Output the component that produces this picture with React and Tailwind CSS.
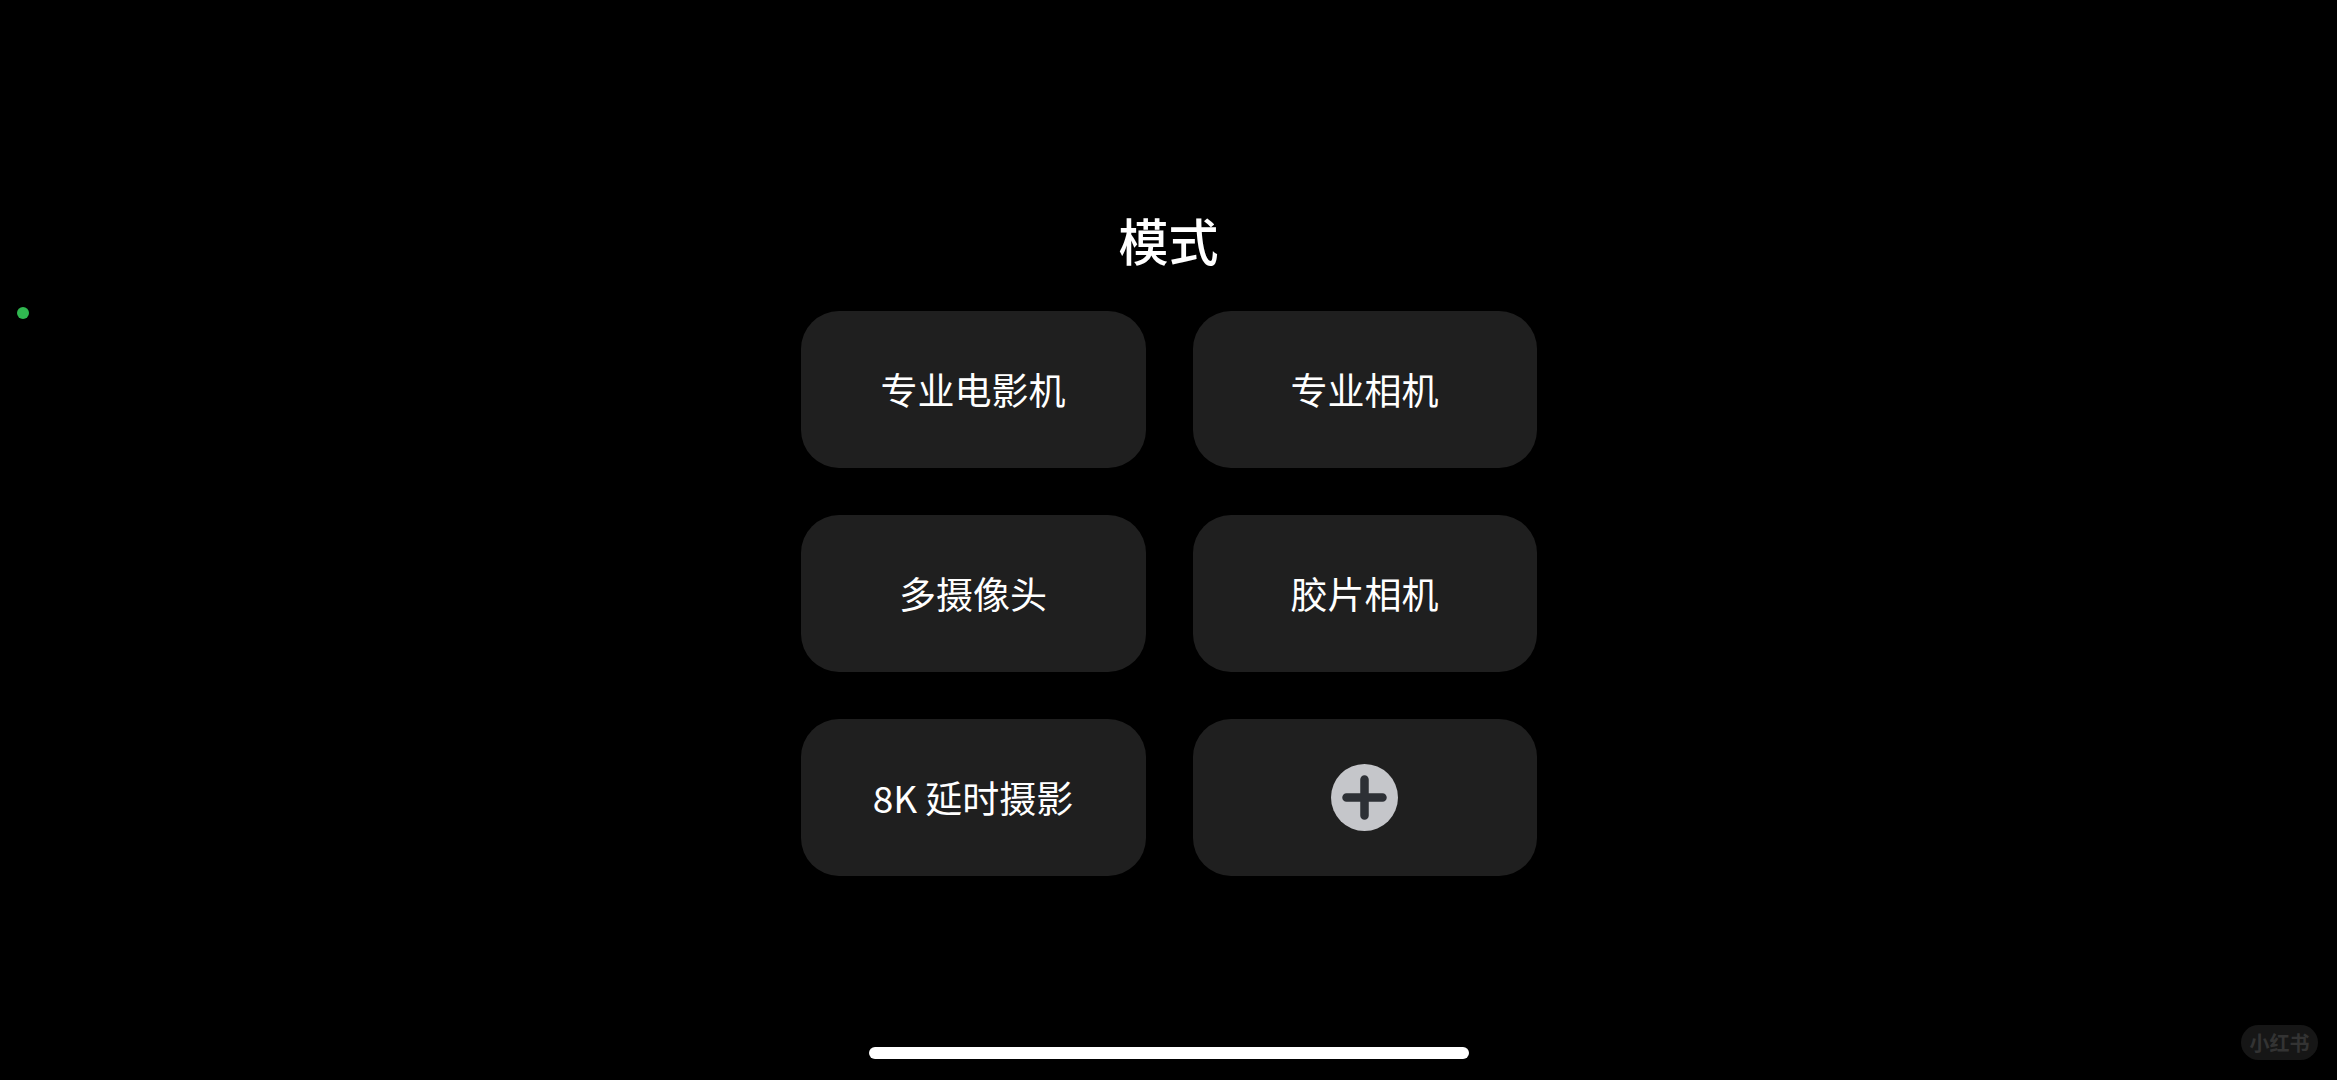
export default function App() {
  const cards = ["专业电影机", "专业相机", "多摄像头", "胶片相机", "8K 延时摄影"];
  return (
    <div
      className="relative w-[2337px] h-[1080px] bg-black overflow-hidden text-white"
      style={{ fontFamily: '"Noto Sans CJK SC", "Noto Sans", sans-serif' }}
    >
      <div className="absolute left-[17px] top-[307px] w-[12px] h-[12px] rounded-full bg-[#30b850]" />
      <div className="flex flex-col items-center pt-[214px]">
        <div className="text-[50px] leading-[50px] font-medium">模式</div>
        <div className="mt-[47px] grid grid-cols-[345px_344px] gap-x-[47px] gap-y-[47px]">
          {cards.map((c) => (
            <div
              key={c}
              className="h-[157px] rounded-[38px] bg-[#1f1f1f] flex items-center justify-center text-[37px] font-normal"
            >
              {c}
            </div>
          ))}
          <div className="h-[157px] rounded-[38px] bg-[#1f1f1f] flex items-center justify-center">
            <svg width="67" height="67" viewBox="0 0 67 67">
              <circle cx="33.5" cy="33.5" r="33.5" fill="#c5c6ca" />
              <path d="M33.5 15.5 V51.5 M15.5 33.5 H51.5" stroke="#2d3035" strokeWidth="8.5" strokeLinecap="round" />
            </svg>
          </div>
        </div>
      </div>
      <div className="absolute left-[869px] top-[1047px] w-[600px] h-[12px] rounded-full bg-white" />
      <div className="absolute left-[2241px] top-[1025px] w-[77px] h-[35px] rounded-full bg-[#161616] flex items-center justify-center text-[20px] font-bold text-[#333333] leading-none">
        小红书
      </div>
    </div>
  );
}
